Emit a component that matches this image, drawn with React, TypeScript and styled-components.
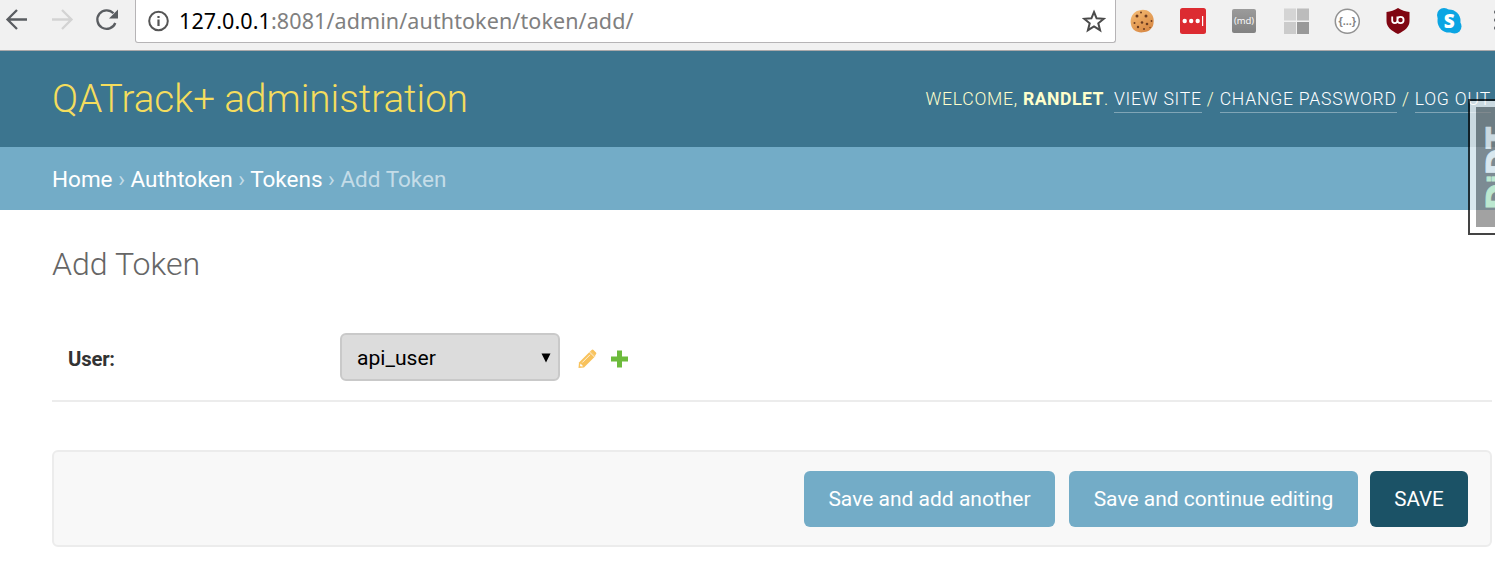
import React from 'react';
import styled, { createGlobalStyle } from 'styled-components';

const Global = createGlobalStyle`
  * { box-sizing: border-box; }
  html { overflow: hidden; background: #fff; }
  body { margin: 0; font-family: Roboto, 'Liberation Sans', sans-serif; color: #333; overflow: hidden; }
`;

const Page = styled.div`
  position: relative;
  width: 1495px;
  height: 565px;
  overflow: hidden;
  background: #fff;
`;

const BrowserBar = styled.div`
  display: flex;
  align-items: flex-start;
  height: 51px;
  background: #f1f1f1;
  border-bottom: 1px solid #aba9aa;
  overflow: hidden;
`;

const NavIcons = styled.div`
  flex: none;
  width: 135px;
  height: 43px;
`;

const AddressBox = styled.div`
  flex: none;
  display: flex;
  align-items: center;
  width: 981px;
  height: 43px;
  padding: 0 9px 1px 11px;
  background: #fff;
  border: 1px solid #b6b4b6;
  border-top: 0;
  border-radius: 0 0 3px 3px;
`;

const Url = styled.span`
  flex: 1;
  margin-left: 9px;
  font: 21.5px/40px 'Noto Sans', sans-serif;
  letter-spacing: 0.1px;
  color: #808080;
  white-space: nowrap;
`;

const Host = styled.span`
  color: #000;
`;

const Extensions = styled.div`
  flex: none;
  width: 379px;
  height: 43px;
`;

const Header = styled.header`
  display: flex;
  justify-content: space-between;
  align-items: center;
  height: 96px;
  padding: 0 3px 0 52px;
  background: #3c758f;
`;

const SiteName = styled.h1`
  margin: 0;
  font-size: 38.6px;
  font-weight: 300;
  line-height: 46px;
  color: #f5dd5d;
  white-space: nowrap;
`;

const UserTools = styled.div`
  font-size: 17.6px;
  font-weight: 300;
  line-height: 26px;
  letter-spacing: 0.76px;
  margin-right: 1px;
  text-transform: uppercase;
  color: #ffc;
  white-space: nowrap;
`;

const UserName = styled.strong`
  font-weight: 700;
  letter-spacing: 0.5px;
`;

const ToolLink = styled.a`
  display: inline-block;
  line-height: 26px;
  color: #fff;
  border-bottom: 1px solid rgba(255, 255, 255, 0.35);
`;

const Breadcrumbs = styled.nav`
  height: 63px;
  padding: 0 52px;
  background: #73acc7;
  color: #c4dce8;
  font-size: 22.5px;
  line-height: 64px;
  white-space: nowrap;
`;

const Crumb = styled.a`
  color: #fff;
`;

const Content = styled.main`
  padding: 33px 3px 0 52px;
`;

const Title = styled.h2`
  margin: 0;
  font-size: 32.1px;
  font-weight: 300;
  line-height: 42px;
  color: #666;
`;

const FormRow = styled.div`
  display: flex;
  align-items: center;
  height: 88px;
  margin-top: 29px;
  padding: 0 16px;
  border-bottom: 2px solid #ececec;
`;

const Label = styled.label`
  width: 272px;
  padding-top: 3px;
  font-size: 20.3px;
  font-weight: 700;
  letter-spacing: -0.2px;
  color: #333;
`;

const Select = styled.div`
  display: flex;
  align-items: center;
  justify-content: space-between;
  width: 220px;
  height: 48px;
  padding: 1px 7px 0 15px;
  border: 2px solid #c9c9c9;
  border-radius: 6px;
  background: #dcdcdc;
  color: #000;
  font-size: 21.1px;
`;

const RowIcons = styled.svg`
  margin: 3px 0 0 18px;
`;

const SubmitRow = styled.div`
  display: flex;
  align-items: center;
  justify-content: flex-end;
  height: 97px;
  margin-top: 48px;
  padding: 0 22px;
  background: #f8f8f8;
  border: 2px solid #ececec;
  border-radius: 6px;
`;

const Button = styled.button<{ $width: number; $gap?: number; $primary?: boolean }>`
  width: ${(p) => p.$width}px;
  height: 56px;
  margin: 0 0 0 ${(p) => p.$gap ?? 0}px;
  padding: 0;
  border: 0;
  border-radius: 6px;
  background: ${(p) => (p.$primary ? '#1b5266' : '#73acc7')};
  color: #fff;
  font: 400 ${(p) => (p.$primary ? 20.6 : 21)}px/56px Roboto, sans-serif;
  white-space: nowrap;
`;

const DebugHandle = styled.div`
  position: absolute;
  left: 1468px;
  top: 99px;
  width: 60px;
  height: 136px;
  padding: 6px;
  border: 2px solid #000;
  background: #fff;
  opacity: 0.73;
`;

const DebugLabel = styled.div`
  width: 44px;
  height: 120px;
  padding: 17px 0 0;
  background: #808080;
  color: #fff;
  font: 700 32px/44px 'DejaVu Sans', sans-serif;
  -webkit-text-stroke: 0.8px currentColor;
  writing-mode: vertical-rl;
  transform: rotate(180deg);
`;

const DebugGreen = styled.span`
  color: #d8ffd4;
`;

const DebugJ = styled.span`
  font-size: 24px;
  margin: 0 1px 0 2px;
`;

function Navigation() {
  return (
    <NavIcons>
      <svg width="135" height="43" fill="none" stroke="#5a5d61" strokeWidth="2.3">
        <path d="M27 19.5H8M17 10L7.5 19.5L17 29" />
        <path d="M52 19.5H71M62 10L71.500 19.500L62 29" stroke="#d3d3d3" />
        <path d="M115.300 23A9.300 9.300 0 1 1 113.500 13.300" />
        <path d="M118 9.500V18.500H109Z" fill="#5a5d61" stroke="none" />
      </svg>
    </NavIcons>
  );
}

function ExtensionIcons() {
  return (
    <Extensions>
      <svg width="379" height="43">
        <defs>
          <linearGradient id="cookie" x1="0" y1="0" x2="0.6" y2="1">
            <stop offset="0" stopColor="#f6bd75" />
            <stop offset="1" stopColor="#d98a45" />
          </linearGradient>
          <linearGradient id="md" x1="0" y1="0" x2="0" y2="1">
            <stop offset="0" stopColor="#9b9b9b" />
            <stop offset="1" stopColor="#828282" />
          </linearGradient>
        </defs>
        <path d="M23 10.500C27 9.200 31 10 33.500 12C37 14.500 38.400 19 37.500 23.500C37 28 33 31.800 28.500 32C22 33.500 16 30.500 15 24.500C13.500 18 17 11.500 23 10.500Z" fill="url(#cookie)" />
        <g fill="#6b3b20">
          <circle cx="25" cy="12.500" r="1" /><circle cx="21" cy="16" r="1.500" />
          <circle cx="30" cy="16" r="1.500" /><circle cx="35.500" cy="21" r="0.900" />
          <circle cx="26" cy="22.500" r="1.300" /><circle cx="18.500" cy="23" r="1" />
          <circle cx="31" cy="24" r="1.300" /><circle cx="22" cy="27" r="1.200" />
          <circle cx="28" cy="29" r="1" /><circle cx="34" cy="27.500" r="0.700" />
        </g>
        <rect x="64" y="8" width="26" height="26" rx="2.500" fill="#dc2b31" />
        <g fill="#fff">
          <circle cx="68.700" cy="21" r="2.200" /><circle cx="75.200" cy="21" r="2.200" /><circle cx="81.700" cy="21" r="2.200" />
          <rect x="86" y="16" width="1.200" height="10" />
        </g>
        <rect x="116" y="9" width="24" height="24" rx="2" fill="url(#md)" />
        <text x="128" y="24" textAnchor="middle" fontFamily="Open Sans, sans-serif" fontSize="9.500" fill="#fff">(md)</text>
        <rect x="168" y="8.500" width="12" height="12" fill="#d4d4d4" />
        <rect x="181" y="8.500" width="12" height="12" fill="#bcbcbc" />
        <rect x="168" y="22" width="12" height="12" fill="#cbcbcb" />
        <rect x="181" y="22" width="12" height="12" fill="#999" />
        <circle cx="231.300" cy="21.300" r="12" fill="#fff" stroke="#929292" strokeWidth="1.500" />
        <text x="231.300" y="25" textAnchor="middle" fontFamily="Liberation Sans, sans-serif" fontSize="11" fontWeight="700" fill="#858585">{'{...}'}</text>
        <path d="M282 8C278.500 10.500 274.500 11.600 270.500 12V21C270.500 27 275 30.500 282 34C289 30.500 293.500 27 293.500 21V12C289.500 11.600 285.500 10.500 282 8Z" fill="#800612" />
        <path d="M276.200 16.500V20.500A2.600 2.600 0 0 0 281.400 20.500V16.500M281.400 20A3.100 3.100 0 1 0 287.600 20A3.100 3.100 0 1 0 281.400 20" fill="none" stroke="#fff" strokeWidth="1.800" />
        <g fill="#0ba5e3">
          <circle cx="333" cy="21" r="11.500" /><circle cx="328" cy="15" r="7" /><circle cx="338.500" cy="26.500" r="7" />
        </g>
        <text x="333.200" y="28" textAnchor="middle" fontFamily="Open Sans, sans-serif" fontSize="19" fontWeight="800" fill="#fff">S</text>
        <g fill="#5a5d61"><circle cx="380" cy="12" r="2" /><circle cx="380" cy="20" r="2" /><circle cx="380" cy="28" r="2" /></g>
      </svg>
    </Extensions>
  );
}

export default function App() {
  return (
    <Page>
      <Global />
      <BrowserBar>
        <Navigation />
        <AddressBox>
          <svg width="23" height="24" fill="none" stroke="#555" strokeWidth="2">
            <circle cx="11.500" cy="12" r="9.300" />
            <path d="M11.500 10.500V17M11.500 7V9" strokeWidth="2.200" />
          </svg>
          <Url><Host>127.0.0.1</Host>:8081/admin/authtoken/token/add/</Url>
          <svg width="24" height="24" fill="none" stroke="#4a4a4a" strokeWidth="2">
            <path d="M12 3L14.600 9.300L21.800 9.800L16.300 14.300L18.100 21.200L12 17.400L5.900 21.200L7.700 14.300L2.200 9.800L9.400 9.300Z" />
          </svg>
        </AddressBox>
        <ExtensionIcons />
      </BrowserBar>
      <Header>
        <SiteName>QATrack+ administration</SiteName>
        <UserTools>
          Welcome, <UserName>randlet</UserName>. <ToolLink>View site</ToolLink> / <ToolLink>Change password</ToolLink> / <ToolLink>Log out</ToolLink>
        </UserTools>
      </Header>
      <Breadcrumbs>
        <Crumb>Home</Crumb> › <Crumb>Authtoken</Crumb> › <Crumb>Tokens</Crumb> › Add Token
      </Breadcrumbs>
      <Content>
        <Title>Add Token</Title>
        <FormRow>
          <Label>User:</Label>
          <Select>
            api_user
            <svg width="10" height="10"><path d="M0.500 0.500H9.500L5 9.500Z" fill="#000" /></svg>
          </Select>
          <RowIcons width="52" height="20">
            <path d="M1 13.500L12.500 2L17.500 7L6 18.500L0.500 19Z" fill="#f8c25c" />
            <path d="M12.500 2L14 0.800Q14.800 0.300 15.500 1L18 3.500Q18.800 4.300 18 5.200L17 6.500Z" fill="#f8c25c" />
            <path d="M11.200 2.700L16.700 8.200M4.300 13.500L12 5.800" stroke="#fff" strokeWidth="0.800" />
            <path d="M2.500 14.500L5.200 17.200L2.800 17.500L2 16.700Z" fill="#fff" />
            <path d="M39 1.500H44V7.500H50V12.500H44V18.500H39V12.500H33V7.500H39Z" fill="#6dbb3c" />
          </RowIcons>
        </FormRow>
        <SubmitRow>
          <Button $width={251}>Save and add another</Button>
          <Button $width={289} $gap={14}>Save and continue editing</Button>
          <Button $width={98} $gap={12} $primary>SAVE</Button>
        </SubmitRow>
      </Content>
      <DebugHandle>
        <DebugLabel><DebugGreen>D<DebugJ>j</DebugJ></DebugGreen>DT</DebugLabel>
      </DebugHandle>
    </Page>
  );
}
